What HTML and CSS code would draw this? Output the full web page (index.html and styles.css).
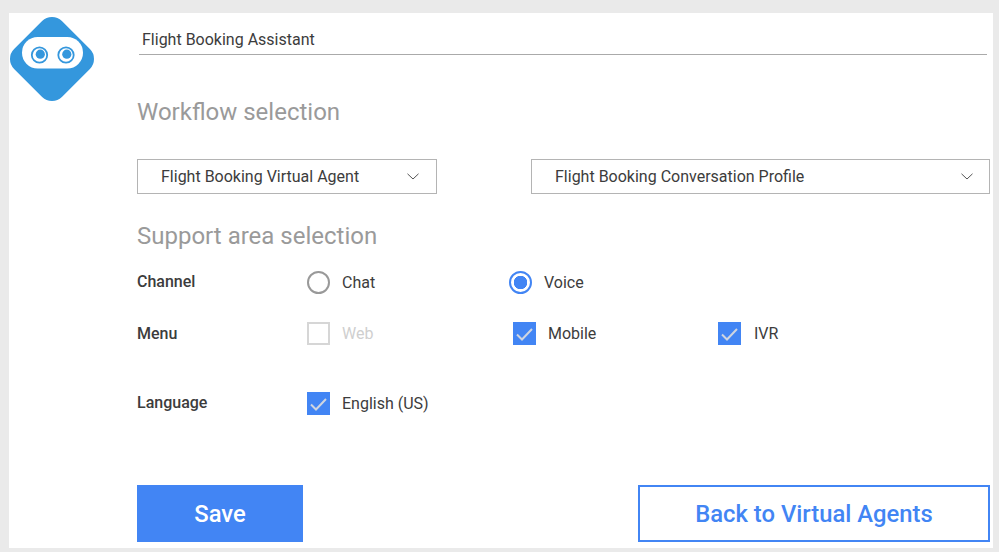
FILE: index.html
```html
<!DOCTYPE html>
<html lang="en">
<head>
<meta charset="utf-8">
<title>Flight Booking Assistant</title>
<link rel="stylesheet" href="styles.css">
</head>
<body>
<div class="panel">
  <div class="logo-col">
    <svg class="logo" width="86" height="86" viewBox="0 0 86 86">
      <rect x="9.200" y="9.200" width="67.600" height="67.600" rx="14" transform="rotate(45 43 43)" fill="#3497dd"/>
      <rect x="13" y="21" width="61" height="31.500" rx="15.700" fill="#fff"/>
      <circle cx="30.500" cy="39" r="7.700" fill="none" stroke="#3497dd" stroke-width="1.800"/>
      <circle cx="31.300" cy="38.200" r="4.600" fill="#3497dd"/>
      <circle cx="57" cy="39" r="7.700" fill="none" stroke="#3497dd" stroke-width="1.800"/>
      <circle cx="57.800" cy="38.200" r="4.600" fill="#3497dd"/>
    </svg>
  </div>
  <div class="main">
    <div class="name-field">Flight Booking Assistant</div>
    <h2 class="heading heading-workflow">Workflow selection</h2>
    <div class="selects">
      <div class="select select-agent">
        <span>Flight Booking Virtual Agent</span>
        <svg class="chevron" width="12" height="7" viewBox="0 0 12 7"><path d="M.5.8 6 6 11.500.8" fill="none" stroke="#555" stroke-width="1"/></svg>
      </div>
      <div class="select select-profile">
        <span>Flight Booking Conversation Profile</span>
        <svg class="chevron" width="12" height="7" viewBox="0 0 12 7"><path d="M.5.8 6 6 11.500.8" fill="none" stroke="#555" stroke-width="1"/></svg>
      </div>
    </div>
    <h2 class="heading heading-support">Support area selection</h2>
    <div class="row row-channel">
      <div class="row-label row-label-raised">Channel</div>
      <div class="opt opt-chat"><span class="radio"></span><span>Chat</span></div>
      <div class="opt"><span class="radio radio-on"></span><span>Voice</span></div>
    </div>
    <div class="row row-menu">
      <div class="row-label">Menu</div>
      <div class="opt opt-web disabled"><span class="check check-off"></span><span>Web</span></div>
      <div class="opt opt-mobile"><span class="check"><svg width="23" height="23" viewBox="0 0 23 23"><path d="M4 12.500 9 17.500 19 7" fill="none" stroke="#cfd5e0" stroke-width="2"/></svg></span><span>Mobile</span></div>
      <div class="opt"><span class="check"><svg width="23" height="23" viewBox="0 0 23 23"><path d="M4 12.500 9 17.500 19 7" fill="none" stroke="#cfd5e0" stroke-width="2"/></svg></span><span class="label-wide">IVR</span></div>
    </div>
    <div class="row row-language">
      <div class="row-label row-label-raised">Language</div>
      <div class="opt"><span class="check"><svg width="23" height="23" viewBox="0 0 23 23"><path d="M4 12.500 9 17.500 19 7" fill="none" stroke="#cfd5e0" stroke-width="2"/></svg></span><span>English (US)</span></div>
    </div>
    <div class="actions">
      <div class="btn btn-save">Save</div>
      <div class="btn btn-back">Back to Virtual Agents</div>
    </div>
  </div>
</div>
</body>
</html>
```
FILE: styles.css
```css
* { box-sizing: border-box; }
html, body { height: 100%; }
body {
  margin: 0;
  background: #eaeaea;
  font-family: Roboto, "Liberation Sans", sans-serif;
  color: #3c3c3c;
  overflow: hidden;
}
.panel {
  display: flex;
  margin: 13px 6px 0 9px;
  height: 535px;
  background: #fff;
}
.logo-col { width: 128px; flex: none; }
.logo { display: block; margin-top: 3px; }
.main { width: 853px; flex: none; }
.name-field {
  margin: 0 3px 0 2px;
  height: 42px;
  padding: 17px 0 0 3px;
  font-size: 16px;
  line-height: 19px;
  border-bottom: 1px solid #aaa;
}
.heading {
  margin: 0;
  font-weight: 400;
  color: #9a9a9a;
  font-size: 24px;
  line-height: 28px;
}
.heading-workflow { margin-top: 43px; }
.selects {
  display: flex;
  justify-content: space-between;
  margin-top: 33px;
}
.select {
  display: flex;
  align-items: center;
  justify-content: space-between;
  height: 35px;
  padding: 0 16px 0 23px;
  border: 1px solid #b4b4b4;
  font-size: 16px;
}
.select-agent { width: 300px; padding-right: 17px; }
.select-profile { width: 459px; }
.heading-support { margin-top: 28px; }
.row {
  display: flex;
  align-items: center;
  height: 24px;
  font-size: 16px;
}
.row-channel { margin-top: 20px; }
.row-menu { margin-top: 27px; }
.row-language { margin-top: 46px; }
.row-label { width: 170px; flex: none; font-weight: 500; }
.row-label-raised { margin-bottom: 2px; }
.opt { display: flex; align-items: center; gap: 12px; }
.opt-chat { width: 202px; }
.opt-web { width: 206px; }
.opt-mobile { width: 205px; }
.label-wide { margin-left: 1px; }
.disabled { color: #cfcfcf; }
.radio {
  width: 23px;
  height: 23px;
  border: 2px solid #999;
  border-radius: 50%;
  flex: none;
}
.radio-on {
  border-color: #4285f4;
  background: radial-gradient(circle, #4285f4 0 6.500px, transparent 7px);
}
.check {
  display: block;
  width: 23px;
  height: 23px;
  flex: none;
  background: #4285f4;
}
.check svg { display: block; }
.check-off { background: #fff; border: 2px solid #d6d6d6; }
.actions {
  display: flex;
  justify-content: space-between;
  margin-top: 70px;
}
.btn {
  display: flex;
  align-items: center;
  justify-content: center;
  height: 57px;
  padding-top: 1px;
  font-size: 23.800px;
  font-weight: 500;
}
.btn-save { width: 166px; background: #4285f4; color: #fff; }
.btn-back { width: 352px; border: 2px solid #4285f4; color: #4285f4; }
```
